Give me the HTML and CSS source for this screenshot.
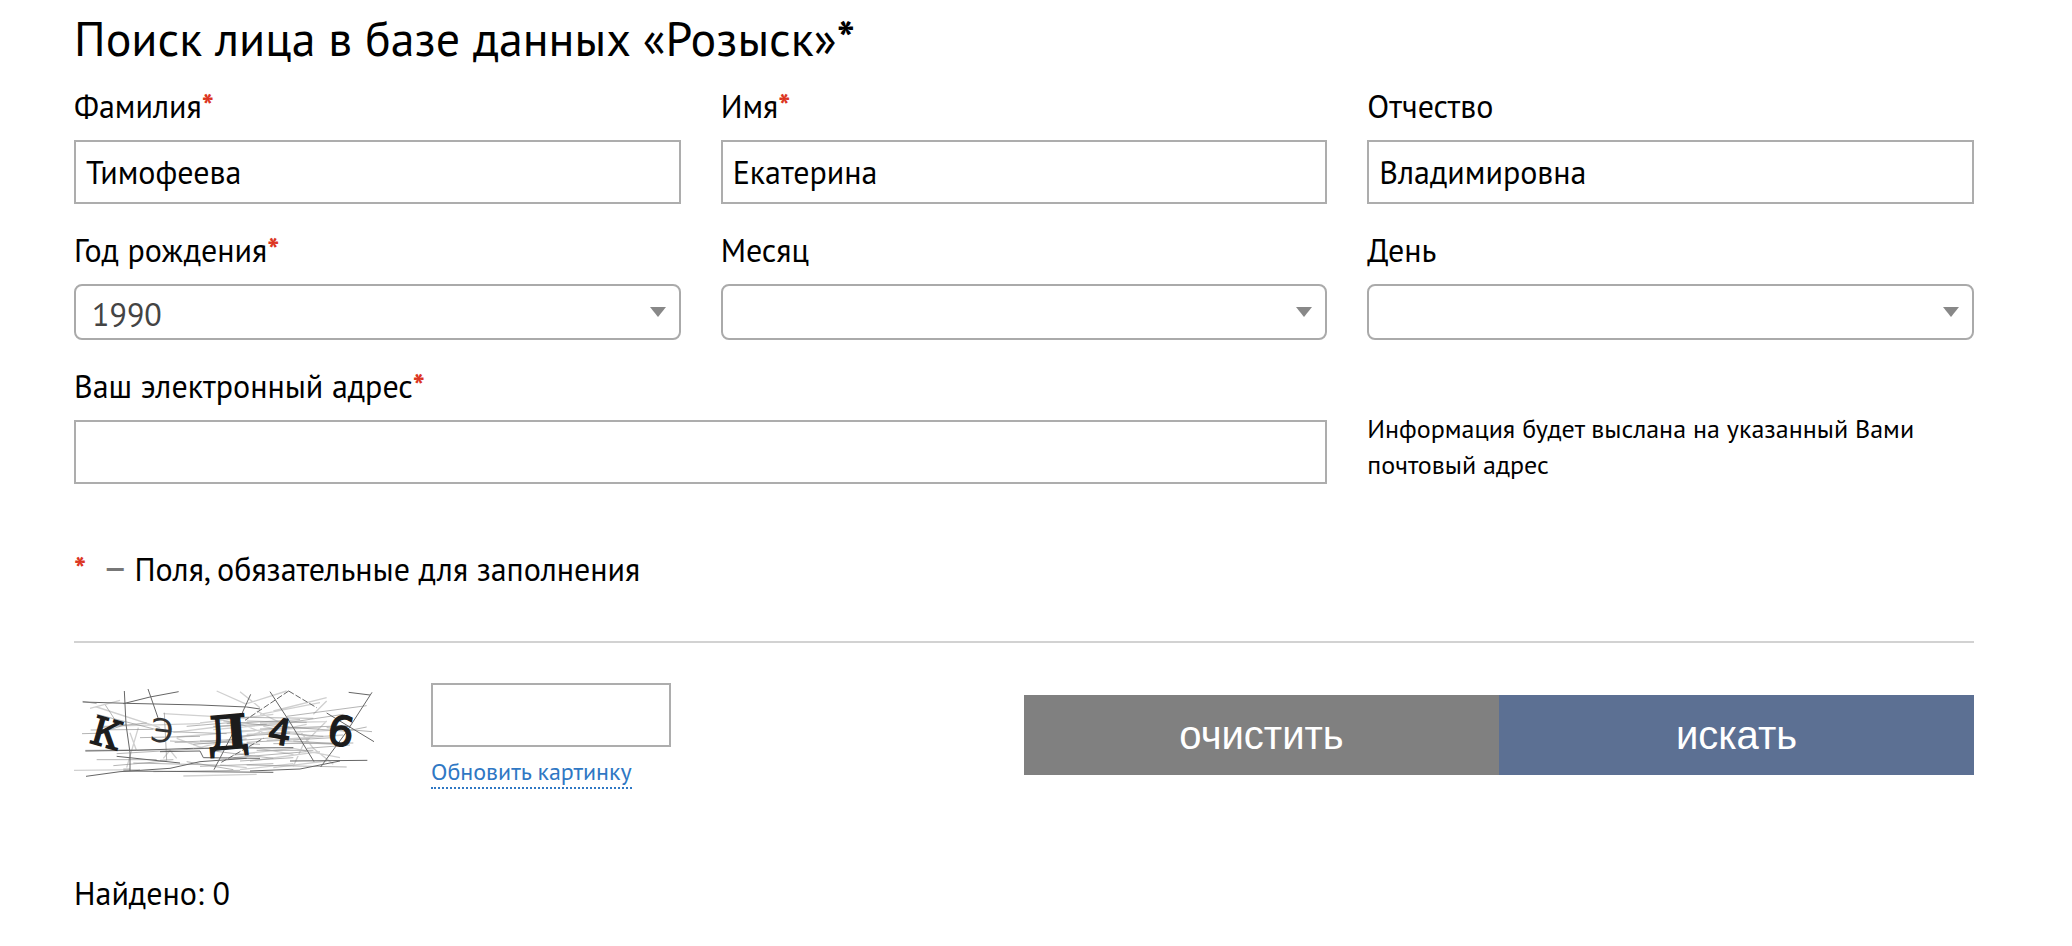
FILE: index.html
```html
<!DOCTYPE html>
<html lang="ru">
<head>
    <meta charset="UTF-8">
    <meta name="viewport" content="width=device-width, initial-scale=1.0">
    <title>Поиск лица в базе данных «Розыск»</title>
    <link rel="stylesheet" href="styles.css">
</head>
<body>
    <div class="container">
        <h1>Поиск лица в базе данных «Розыск»<b>*</b></h1>

        <form id="searchForm">
            <div class="row">
                <div class="field">
                    <label for="family">Фамилия<b class="req">*</b></label>
                    <input type="text" id="family" name="family" value="Тимофеева">
                </div>
                <div class="field">
                    <label for="firstName">Имя<b class="req">*</b></label>
                    <input type="text" id="firstName" name="firstName" value="Екатерина">
                </div>
                <div class="field">
                    <label for="middleName">Отчество</label>
                    <input type="text" id="middleName" name="middleName" value="Владимировна">
                </div>
            </div>

            <div class="row">
                <div class="field">
                    <label for="year">Год рождения<b class="req">*</b></label>
                    <select id="year" name="year">
                        <option value="1990" selected>1990</option>
                    </select>
                </div>
                <div class="field">
                    <label for="month">Месяц</label>
                    <select id="month" name="month">
                        <option value=""></option>
                    </select>
                </div>
                <div class="field">
                    <label for="day">День</label>
                    <select id="day" name="day">
                        <option value=""></option>
                    </select>
                </div>
            </div>

            <div class="row">
                <div class="field wide">
                    <label for="email">Ваш электронный адрес<b class="req">*</b></label>
                    <input type="email" id="email" name="email">
                </div>
                <p class="hint">Информация будет выслана на указанный Вами почтовый адрес</p>
            </div>

            <p class="legend"><b class="req">*</b><span class="dash">–</span>Поля, обязательные для заполнения</p>

            <div class="bottom">
                <svg class="captcha" viewBox="42 66 900 300" role="img" aria-label="Код с картинки">
                    <g class="noise light">
                        <path d="M90 142L180 118M110 138L300 200M470 90L560 130M540 92L600 140M560 128L680 90M600 160L780 125M640 150L800 110M310 158L560 172M130 196L420 188M340 214L520 192M350 228L620 206M330 240L480 250M410 262L600 214M420 186L640 160M460 206L700 184M500 238L740 190M540 210L780 200M560 220L860 206M600 186L800 182M620 238L850 222M610 196L760 228M660 240L820 250M700 262L840 290M560 256L700 280M520 282L700 262M570 300L780 272M480 312L560 320M540 326L700 308M640 320L800 300M700 316L730 250L800 180M200 320L235 200M210 215L230 270M720 210L760 262L820 310M310 292L330 268L350 292M42 328L240 326M370 345L590 340M500 174L640 226M350 232L430 262M590 150L690 200M760 160L800 120"/>
                    </g>
                    <g class="noise">
                        <path d="M68 121L110 128M92 207L280 205M66 218L150 216M110 218L200 190M120 200L260 186M76 268L300 266M110 296L290 296M170 278L540 256M240 230L420 226M330 212L500 218M344 244L560 234M380 196L520 184M400 250L640 230M420 240L600 250M460 196L620 190M500 188L720 176M530 226L690 216M560 180L740 184M600 204L860 194M630 214L790 226M650 196L850 210M640 248L880 246M560 244L820 230M700 240L860 250M520 290L740 272M540 300L700 290M560 312L860 318M740 262L870 252M680 166L920 134M690 184L850 160M380 302L520 326M420 316L640 308M160 314L320 300M220 306L470 312M280 332L540 328M460 270L640 292M800 200L936 212M850 212L920 198M590 268L760 268M480 168L760 172M490 180L690 200M313 155L320 298M300 298L340 296M190 324L210 324M136 132L170 184M110 160L290 206"/>
                    </g>
                    <g class="noise dark">
                        <path d="M68 123L200 127L420 132L560 138L600 144M190 128L270 108L356 92M193 90L198 190L210 275L210 330M264 84L296 176M78 346L180 332L330 322L420 302L560 292M76 270L230 268L400 262L700 260M300 272L420 270L430 290L600 292M630 92L690 184L762 302M866 94L930 102M936 94L860 212L782 318M800 156L942 242M572 100L524 206L462 326M690 300L922 298M570 330L720 324L840 300M170 286L360 306M820 196L870 196M190 330L640 334"/>
                        <path class="dashed" d="M686 90L770 140M686 90L555 178M484 304L610 232"/>
                    </g>
                    <text class="code serif" x="94" y="258" font-size="118" transform="rotate(16 140 215)">К</text>
                    <text class="code thin" x="272" y="244" font-size="98" transform="rotate(6 308 208)">Э</text>
                    <text class="code serif bold" x="440" y="264" font-size="140" transform="rotate(-5 500 215)">Д</text>
                    <text class="code" x="626" y="250" font-size="108" transform="rotate(10 660 208)">4</text>
                    <text class="code" x="804" y="254" font-size="124" transform="rotate(10 842 206)">6</text>
                </svg>

                <div class="captcha-input">
                    <input type="text" id="captcha" name="captcha" aria-label="Код с картинки">
                    <a href="#">Обновить картинку</a>
                </div>

                <div class="buttons">
                    <button type="reset" class="clear">очистить</button>
                    <button type="submit" class="search">искать</button>
                </div>
            </div>
        </form>

        <p class="found">Найдено: 0</p>
    </div>
</body>
</html>
```
FILE: styles.css
```css
* {
    box-sizing: border-box;
}
body {
    margin: 0;
    background-color: #fff;
    color: #000;
    font-family: "PT Sans", "Noto Sans", sans-serif;
    font-size: 32px;
    line-height: 40px;
}
.container {
    padding: 8px 98px 20px 74px;
}
h1 {
    margin: 0 0 16px;
    font-size: 48px;
    font-weight: normal;
    line-height: 60px;
}
p {
    margin: 0;
}
.row {
    display: grid;
    grid-template-columns: repeat(3, 1fr);
    column-gap: 40px;
    margin-bottom: 24px;
}
.field {
    display: flex;
    flex-direction: column;
}
.wide {
    grid-column: span 2;
}
label {
    margin: 2px 0 14px;
}
.req {
    color: #dc3522;
}
input, select {
    width: 100%;
    border: 2px solid #adadad;
    background-color: #fff;
    color: #000;
    font-family: inherit;
    font-size: inherit;
}
input {
    height: 64px;
    padding: 0 10px;
}
select {
    height: 56px;
    padding: 4px 40px 0 16px;
    border-color: #aaa;
    border-radius: 8px;
    color: #444;
    appearance: none;
    background-image: url("data:image/svg+xml,%3Csvg xmlns='http://www.w3.org/2000/svg' width='16' height='10'%3E%3Cpath d='M0 0h16L8 10z' fill='%23888'/%3E%3C/svg%3E");
    background-repeat: no-repeat;
    background-position: right 13px center;
}
.hint {
    align-self: end;
    padding-bottom: 1px;
    font-size: 26px;
    line-height: 36px;
}
.legend {
    margin-top: 62px;
    padding-bottom: 52px;
    border-bottom: 2px solid #d2d2d2;
}
.dash {
    margin: 0 6px 0 16px;
    color: #777;
    font-size: 40px;
    line-height: 1;
}
.bottom {
    display: flex;
    align-items: flex-start;
    padding-top: 40px;
}
.captcha {
    width: 300px;
    height: 100px;
}
.noise {
    fill: none;
    stroke: #909090;
    stroke-width: 2;
}
.light {
    stroke: #d0d0d0;
    stroke-width: 4;
}
.dark {
    stroke: #666;
    stroke-width: 3;
}
.dashed {
    stroke-dasharray: 18 6;
}
.code {
    fill: #1c1c1c;
    stroke: #1c1c1c;
    stroke-width: 4;
    font-family: "DejaVu Sans", sans-serif;
}
.thin {
    fill: #333;
    stroke: none;
}
.serif {
    font-family: "DejaVu Serif", serif;
}
.bold {
    font-weight: bold;
}
.captcha-input {
    display: flex;
    flex-direction: column;
    align-items: flex-start;
    width: 240px;
    margin-left: 57px;
}
.captcha-input a {
    margin-top: 10px;
    border-bottom: 2px dotted #2f78c4;
    color: #2f78c4;
    font-size: 24px;
    line-height: 30px;
    text-decoration: none;
}
.buttons {
    display: flex;
    width: 50%;
    margin: 12px 0 0 auto;
}
button {
    flex: 1;
    height: 80px;
    border: none;
    padding: 0;
    color: #fff;
    font-family: Arial, "Liberation Sans", sans-serif;
    font-size: 40px;
    cursor: pointer;
}
.clear {
    background-color: #808080;
}
.search {
    background-color: #5c7093;
}
.found {
    margin-top: 84px;
}
```
